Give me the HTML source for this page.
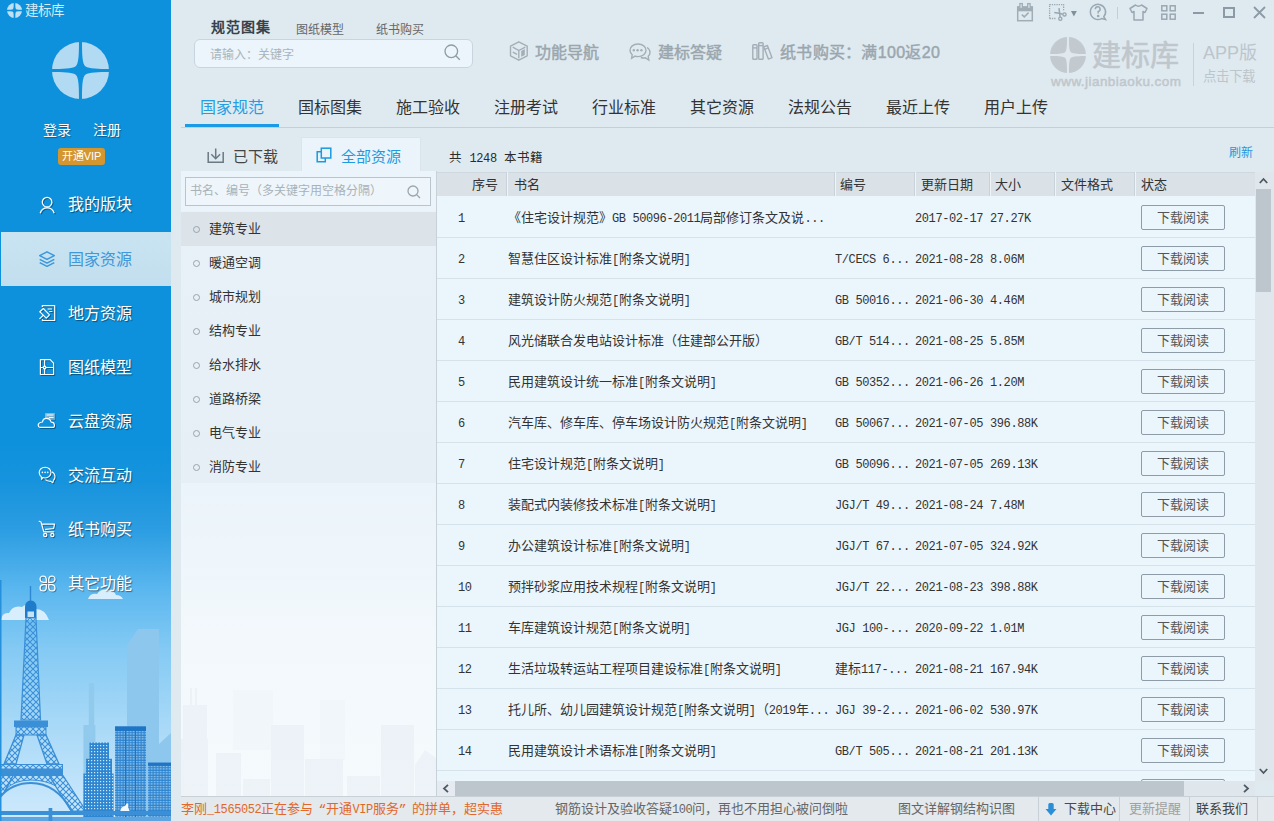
<!DOCTYPE html>
<html lang="zh-CN">
<head>
<meta charset="utf-8">
<style>
*{margin:0;padding:0;box-sizing:border-box}
html,body{width:1274px;height:821px;overflow:hidden}
body{position:relative;background:#dfeaf0;font-family:"Liberation Sans",sans-serif;color:#333}
.a{position:absolute;white-space:nowrap}
svg{position:absolute;overflow:visible}
/* sidebar */
#sb{left:0;top:0;width:171px;height:821px;overflow:hidden;
background:linear-gradient(#0d91dc 0px,#0d91dc 440px,#1693dd 480px,#2c9de2 530px,#5bb7ef 590px,#84caf4 650px,#a6d8f7 720px,#c6e6fb 800px,#cfeafc 821px)}
.mi{left:68px;font-size:16px;line-height:16px;color:#fff;text-shadow:1px 1px 1px rgba(0,0,0,.45)}
.mic{left:38px;width:18px;height:18px}
/* top */
.tb{font-size:16px;line-height:16px;color:#9aa6ae;-webkit-text-stroke:0.45px #9aa6ae}
.nav{top:100px;font-size:16px;line-height:16px;color:#333}
/* list */
.li{left:209px;font-size:13px;line-height:13px;color:#333}
.bul{left:193px;width:7px;height:7px;border:1.5px solid #98a3ab;border-radius:50%}
/* table */
.th{top:178px;font-size:13px;line-height:13px;color:#333}
.sep{top:172px;width:2px;height:24px;border-left:1px solid #c9d2d9;border-right:1px solid #f0f4f7}
.row{left:437px;width:818px;height:41px;border-bottom:1px solid #d6e2ea}
.c{font-family:"Liberation Mono",monospace;font-size:13px;line-height:14px;color:#333;top:15px}
.m{font-size:12px;letter-spacing:-0.4px}
.btn{left:704px;top:8px;width:84px;height:25px;border:1px solid #8e9ca8;border-radius:2px;font-size:13px;line-height:23px;text-align:center;color:#555}
.st{top:803px;font-size:13px;line-height:14px}
</style>
</head>
<body>

<!-- SIDEBAR -->
<div id="sb" class="a">
  <!-- small logo -->
  <svg style="left:7px;top:3px" width="15" height="15" viewBox="0 0 56 56">
    <circle cx="28" cy="28" r="28" fill="#bfe0f5"/>
    <path d="M25 0 H31 C31 10 31 21 34 23 C37 25 46 25 56 25 V31 C46 31 37 31 34 33 C31 35 31 46 31 56 H25 C25 46 25 35 22 33 C19 31 10 31 0 31 V25 C10 25 19 25 22 23 C25 21 25 10 25 0Z" fill="#0d91dc"/>
  </svg>
  <div class="a" style="left:25px;top:4px;font-size:13.5px;line-height:14px;color:#d4ebf8">建标库</div>
  <!-- avatar -->
  <svg style="left:52px;top:42px" width="57" height="57" viewBox="0 0 56 56">
    <circle cx="28" cy="28" r="28" fill="#b2daf2"/>
    <path d="M26.5 0 H29.5 C29.5 10 29.5 22 33 24 C36 26 46 26.5 56 26.5 V29.5 C46 29.5 36 30 33 32 C29.5 34 29.5 46 29.5 56 H26.5 C26.5 46 26.5 34 23 32 C20 30 10 29.5 0 29.5 V26.5 C10 26.5 20 26 23 24 C26.5 22 26.5 10 26.5 0Z" fill="#0d91dc"/>
  </svg>
  <div class="a" style="left:43px;top:123px;font-size:14px;line-height:15px;color:#fff;text-shadow:1px 1px 1px rgba(0,0,0,.35)">登录</div>
  <div class="a" style="left:93px;top:123px;font-size:14px;line-height:15px;color:#fff;text-shadow:1px 1px 1px rgba(0,0,0,.35)">注册</div>
  <div class="a" style="left:58px;top:148px;width:47px;height:17px;background:#d4962f;border-radius:3px;color:#fff;font-size:11px;line-height:17px;text-align:center">开通VIP</div>


  <!-- illustration -->
  <svg style="left:0;top:580px" width="171" height="241" viewBox="0 580 171 241">
    <defs>
      <pattern id="lat" width="6" height="6" patternUnits="userSpaceOnUse">
        <path d="M0 0 L6 6 M6 0 L0 6" stroke="#3b8fd7" stroke-width="1.1"/>
      </pattern>
      <pattern id="win" width="3" height="3" patternUnits="userSpaceOnUse">
        <rect width="3" height="3" fill="#2e86d1"/><rect x="1" y="1" width="1.2" height="1.2" fill="#cfe8fa"/>
      </pattern>
      <pattern id="win2" width="3" height="2.5" patternUnits="userSpaceOnUse">
        <rect width="3" height="2.5" fill="#2b82cf"/><rect x="0.6" y="1" width="2" height="1" fill="#a9d3f3"/>
      </pattern>
    </defs>
    <!-- background light buildings -->
    <path d="M127 645 L138 629 L159 629 L159 744 L171 733 L171 821 L127 821Z" fill="#8ec7ee"/>
    <rect x="88.8" y="683" width="5.4" height="50" fill="#92caee"/>
    <rect x="83.4" y="725" width="12" height="96" fill="#92caee"/>
    <!-- clouds -->
    <path d="M1 620 Q2 612 9 613 Q13 605 22 607 Q26 603 33 607 L36 609 Q45 609 49 620Z" fill="#d8eefc"/>
    <path d="M88 599 Q90 593 97 594 Q101 588 108 590 Q114 590 116 595 Q121 595 123 599Z" fill="#d8eefc"/>
    <!-- tower top -->
    <line x1="30.5" y1="586" x2="30.5" y2="602" stroke="#2f86d2" stroke-width="1.4"/>
    <path d="M25 618 V607 Q25 601 30.7 600.5 Q36.5 601 36.5 607 V618Z" fill="#1f7cca"/>
    <rect x="27.5" y="611.5" width="6.5" height="5.5" fill="#c6e2f6"/>
    <!-- upper lattice -->
    <path d="M26 618 L36 618 L40.5 720 L21 720Z" fill="url(#lat)" stroke="#3b8fd7" stroke-width="1.2"/>
    <!-- platform 1 -->
    <rect x="14" y="720.5" width="34" height="6.5" fill="#3b8fd7"/>
    <rect x="16" y="727" width="30" height="8" fill="url(#lat)" stroke="#3b8fd7" stroke-width="1"/>
    <!-- mid legs -->
    <path d="M16 735 L24 735 L16 764 L4 764Z" fill="url(#lat)" stroke="#3b8fd7" stroke-width="1.3"/>
    <path d="M37 735 L46 735 L59 764 L47 764Z" fill="url(#lat)" stroke="#3b8fd7" stroke-width="1.3"/>
    <!-- platform 2 -->
    <rect x="0.5" y="764.5" width="62" height="4.5" fill="url(#lat)" stroke="#3b8fd7" stroke-width="1"/>
    <rect x="0" y="769" width="63" height="6.5" fill="#3b8fd7"/>
    <!-- lower legs + arch -->
    <path d="M0 775.5 L13 775.5 L6 790 L0 797Z" fill="url(#lat)" stroke="#3b8fd7" stroke-width="1.2"/>
    <path d="M49 775.5 L63 775.5 L86 811 L71 811Z" fill="url(#lat)" stroke="#3b8fd7" stroke-width="1.2"/>
    <path d="M13 775.5 L49 775.5 L56 786 Q45 780 31 780 Q14 780 5 790Z" fill="url(#lat)" stroke="#3b8fd7" stroke-width="1"/>
    <path d="M0 797 Q12 783 31 783 Q56 783 72 811" fill="none" stroke="#3b8fd7" stroke-width="2"/>
    <!-- buildings -->
    <path d="M89.4 742.5 H109 V758.7 H112 V773.5 H113.6 V821 H83.4 V773.5 H86 V758.7 H89.4Z" fill="url(#win)"/>
    <rect x="115" y="726.4" width="31" height="95" fill="url(#win2)"/>
    <rect x="115" y="726.4" width="31" height="4.5" fill="#1f74c4"/>
    <rect x="125" y="731" width="1" height="90" fill="#1f74c4"/><rect x="135" y="731" width="1" height="90" fill="#1f74c4"/>
    <rect x="148" y="762.7" width="23" height="59" fill="url(#win2)"/>
    <rect x="148" y="762.7" width="23" height="3" fill="#1f74c4"/>
    <!-- cyclist -->
    <path d="M120 812 Q121 806 125 806 L127 803 Q129 804 128 807 L130 812Z" fill="#f2f9fe"/>
    <!-- ground rail -->
    <rect x="0" y="811" width="171" height="4" fill="#3b8fd7"/>
    <rect x="0" y="817" width="171" height="4" fill="#5ba6e2"/>
    <rect x="48.6" y="808" width="3.7" height="13" fill="#3b8fd7"/>
    <rect x="0" y="580" width="1.5" height="241" fill="#2590dc"/>
  </svg>

  <!-- active bg -->
  <div class="a" style="left:1px;top:232px;width:170px;height:54px;background:linear-gradient(#c9e3f1,#c2dfef)"></div>


  <!-- menu icons -->
  <svg style="left:39px;top:196px;filter:drop-shadow(1px 1px 0.6px rgba(0,0,0,.35))" width="16" height="18" viewBox="0 0 16 18" fill="none" stroke="#fff" stroke-width="1.3">
    <circle cx="8.1" cy="6.2" r="4.8"/><path d="M1.2 17.2 A7.3 7.3 0 0 1 15.2 17.2"/>
  </svg>
  <svg style="left:39px;top:251px" width="16" height="16" viewBox="0 0 16 16" fill="none" stroke="#3a97da" stroke-width="1.5" stroke-linejoin="round">
    <path d="M8 0.8 L15.3 4.6 L8 8.4 L0.7 4.6Z"/><path d="M0.7 8.3 L8 12.1 L15.3 8.3"/><path d="M0.7 11.6 L8 15.3 L15.3 11.6"/>
  </svg>
  <svg style="left:36px;top:302px;filter:drop-shadow(1px 1px 0.6px rgba(0,0,0,.35))" width="22" height="22" viewBox="0 0 22 22" fill="none" stroke="#fff" stroke-width="1.2" stroke-linejoin="round">
    <path d="M6.3 5 V3.6 H18.7 V18.5 H6.4 V17.2"/><path d="M11.6 7 H16 M13.3 9.5 H16.3"/>
    <path d="M3.8 9.7 L7.4 6.5 L13.5 12.9 L10.3 16.1Z"/><path d="M7.1 13.3 L3.5 16.9"/>
  </svg>
  <svg style="left:36px;top:356px;filter:drop-shadow(1px 1px 0.6px rgba(0,0,0,.35))" width="22" height="22" viewBox="0 0 22 22" fill="none" stroke="#fff" stroke-width="1.2" stroke-linejoin="round">
    <path d="M4.4 3.6 H14.2 L17.6 7.2 V18.5 H4.4Z"/><path d="M8.6 3.6 V18.5 M4.4 11.5 H17.6"/><circle cx="8.6" cy="11.5" r="1.3" fill="#0d91dc"/>
  </svg>
  <svg style="left:35px;top:409px;filter:drop-shadow(1px 1px 0.6px rgba(0,0,0,.35))" width="24" height="24" viewBox="0 0 24 24" fill="none" stroke="#fff" stroke-width="1.2" stroke-linejoin="round">
    <rect x="10.1" y="4.1" width="9.8" height="6.7" fill="rgba(255,255,255,.45)" stroke="none"/><path d="M11.5 6 H18.5 M14 8.5 H18.5" stroke="#fff" stroke-width="1"/>
    <path d="M5 18.4 H17.8 Q19.6 18.4 19.4 16 Q19.2 13.2 16.2 13.2 Q15.2 9.4 11.3 9.4 Q8 9.4 7.5 13 Q3.2 13.5 3.2 16.2 Q3.4 18.4 5 18.4Z" fill="#0d91dc"/>
  </svg>
  <svg style="left:36px;top:463px;filter:drop-shadow(1px 1px 0.6px rgba(0,0,0,.35))" width="22" height="22" viewBox="0 0 22 22" fill="none" stroke="#fff" stroke-width="1.1" stroke-linejoin="round">
    <path d="M15.8 8.8 Q19 10.5 19 13.6 Q19 15.6 17.6 17 L16.8 19.7 L14.4 18.1 Q11.8 18.6 9.4 16.6"/>
    <path d="M9.1 4.2 C12.4 4.2 15 6.6 15 9.6 C15 12.6 12.4 15 9.1 15 C8.2 15 7.4 14.9 6.7 14.6 L5.6 16.4 L5.3 13.8 C4 12.8 3.2 11.3 3.2 9.6 C3.2 6.6 5.8 4.2 9.1 4.2Z" fill="#0d91dc"/>
    <circle cx="6.4" cy="9.4" r=".8" fill="#fff" stroke="none"/><circle cx="9.1" cy="9.4" r=".8" fill="#fff" stroke="none"/><circle cx="11.7" cy="9.4" r=".8" fill="#fff" stroke="none"/>
  </svg>
  <svg style="left:36px;top:517px;filter:drop-shadow(1px 1px 0.6px rgba(0,0,0,.35))" width="22" height="22" viewBox="0 0 22 22" fill="none" stroke="#fff" stroke-width="1.2" stroke-linejoin="round" stroke-linecap="round">
    <path d="M3.2 4.3 L5 5 L7.8 14.8 H17.7 M6.3 7.2 H18.5 L17.6 11.5 L9.6 12.4"/>
    <circle cx="9.2" cy="18" r="1.6"/><circle cx="16.3" cy="18" r="1.6"/>
  </svg>
  <svg style="left:39px;top:575px;filter:drop-shadow(1px 1px 0.6px rgba(0,0,0,.3))" width="17" height="17" viewBox="0 0 17 17" fill="none" stroke="#fff" stroke-width="1.2">
    <path d="M1 4 A3 3 0 0 1 4 1 A3.5 3.5 0 0 1 7.3 4.3 V7.3 H4.3 A3.5 3.5 0 0 1 1 4Z"/>
    <path d="M16 4 A3 3 0 0 0 13 1 A3.5 3.5 0 0 0 9.7 4.3 V7.3 H12.7 A3.5 3.5 0 0 0 16 4Z"/>
    <path d="M1 13 A3 3 0 0 0 4 16 A3.5 3.5 0 0 0 7.3 12.7 V9.7 H4.3 A3.5 3.5 0 0 0 1 13Z"/>
    <path d="M16 13 A3 3 0 0 1 13 16 A3.5 3.5 0 0 1 9.7 12.7 V9.7 H12.7 A3.5 3.5 0 0 1 16 13Z"/>
  </svg>

  <!-- menu -->
  <div class="a mi" style="top:197px">我的版块</div>
  <div class="a mi" style="top:252px;color:#3f98da;text-shadow:none">国家资源</div>
  <div class="a mi" style="top:306px">地方资源</div>
  <div class="a mi" style="top:360px">图纸模型</div>
  <div class="a mi" style="top:414px">云盘资源</div>
  <div class="a mi" style="top:468px">交流互动</div>
  <div class="a mi" style="top:522px">纸书购买</div>
  <div class="a mi" style="top:576px">其它功能</div>
</div>

<!-- TOP AREA -->
<div class="a" style="left:211px;top:20px;font-size:14px;line-height:15px;letter-spacing:1px;font-weight:bold;color:#37424b">规范图集</div>
<div class="a" style="left:296px;top:23px;font-size:12px;line-height:14px;color:#666">图纸模型</div>
<div class="a" style="left:376px;top:23px;font-size:12px;line-height:14px;color:#666">纸书购买</div>

<div class="a" style="left:194px;top:39px;width:279px;height:29px;border:1px solid #c8d5de;border-radius:6px;background:#ebf5fb"></div>
<div class="a" style="left:210px;top:48px;font-size:12px;line-height:14px;color:#a9b4bb">请输入：关键字</div>


<!-- toolbar -->
<svg style="left:510px;top:41px" width="19" height="20" viewBox="0 0 19 20" fill="none" stroke="#a3aeb6" stroke-width="1.4" stroke-linejoin="round" stroke-linecap="round">
  <path d="M8.8 0.8 L17.2 5.2 V14.8 L8.8 19.2 L0.5 14.8 V5.2Z"/><path d="M3.2 6.3 L8.8 9.5 L14.8 6.3 M8.8 9.5 V16.7 M3.3 11.3 L6.6 13.2"/>
  <path d="M11.2 9.9 L14.8 8 V14 L11.2 15.8Z" fill="#a3aeb6" stroke="none"/>
</svg>
<div class="a tb" style="left:535px;top:45px">功能导航</div>
<svg style="left:629px;top:43px" width="22" height="18" viewBox="0 0 22 18" fill="none" stroke="#a3aeb6" stroke-width="1.4">
  <path d="M9 1 C13.8 1 17 3.8 17 7.3 C17 10.8 13.8 13.6 9 13.6 C7.9 13.6 6.9 13.4 6 13.1 L2.6 15.3 L3.2 11.7 C1.8 10.6 1 9 1 7.3 C1 3.8 4.2 1 9 1Z"/>
  <path d="M18 4.5 C20 5.7 21 7.4 21 9.4 C21 11 20.3 12.3 19.2 13.3 L19.8 17 L16.4 14.8 C15 15.1 13.3 15 11.8 14.5"/>
  <circle cx="4.8" cy="7.2" r="1.2" fill="#a3aeb6" stroke="none"/><circle cx="8.6" cy="7.2" r="1.2" fill="#a3aeb6" stroke="none"/><circle cx="12.4" cy="7.2" r="1.2" fill="#a3aeb6" stroke="none"/>
</svg>
<div class="a tb" style="left:658px;top:45px">建标答疑</div>
<svg style="left:751px;top:42px" width="22" height="18" viewBox="0 0 22 18" fill="none" stroke="#a3aeb6" stroke-width="1.4" stroke-linejoin="round">
  <rect x="1.8" y="2.8" width="4.2" height="14.4" rx="0.8"/><path d="M1.8 5.9 H6"/>
  <rect x="7.7" y="0.7" width="4.4" height="16.5" rx="0.8"/><path d="M7.7 3.6 H12.1"/>
  <path d="M12.8 4.9 L16.4 3.5 L21 15.7 L17.4 17.1Z"/><path d="M13.7 7.3 L17.2 5.9"/>
</svg>
<div class="a tb" style="left:780px;top:45px;letter-spacing:0.3px">纸书购买：满100返20</div>

<!-- right logo -->
<svg style="left:1050px;top:37px" width="36" height="36" viewBox="0 0 56 56">
  <circle cx="28" cy="28" r="28" fill="#c2cad0"/>
  <path d="M26.5 0 H29.5 C29.5 10 29.5 22 33 24 C36 26 46 26.5 56 26.5 V29.5 C46 29.5 36 30 33 32 C29.5 34 29.5 46 29.5 56 H26.5 C26.5 46 26.5 34 23 32 C20 30 10 29.5 0 29.5 V26.5 C10 26.5 20 26 23 24 C26.5 22 26.5 10 26.5 0Z" fill="#e1e9ef"/>
</svg>
<div class="a" style="left:1092px;top:40px;font-size:29px;line-height:32px;color:#bfc7cd;-webkit-text-stroke:0.6px #bfc7cd">建标库</div>
<div class="a" style="left:1051px;top:74px;font-size:13.5px;line-height:16px;color:#bfc7cd;-webkit-text-stroke:0.5px #bfc7cd;letter-spacing:0.45px">www.jianbiaoku.com</div>
<div class="a" style="left:1193px;top:43px;width:1px;height:43px;background:#cad2d8"></div>
<div class="a" style="left:1203px;top:42px;font-size:18px;line-height:22px;color:#bcc5cc">APP版</div>
<div class="a" style="left:1203px;top:69px;font-size:13.5px;line-height:16px;color:#bcc5cc">点击下载</div>

<!-- window controls -->
<svg style="left:1016px;top:2px" width="18" height="20" viewBox="0 0 18 20" fill="none" stroke="#a0adb5" stroke-width="1.5">
  <rect x="1.7" y="5" width="14.6" height="13.7"/><rect x="1" y="4.5" width="16" height="4.8" fill="#a0adb5" stroke="none"/>
  <rect x="3.9" y="1.6" width="2.4" height="5" fill="#e1e9ef" stroke-width="1.3"/><rect x="11.7" y="1.6" width="2.4" height="5" fill="#e1e9ef" stroke-width="1.3"/>
  <path d="M5.8 12.6 L8.3 14.9 L12.6 10.6"/>
</svg>
<svg style="left:1048px;top:3px" width="30" height="19" viewBox="0 0 30 19" fill="none" stroke="#98a6af" stroke-width="1.3">
  <path d="M1.6 15.5 V1.6 H15.6 V7.5" stroke-dasharray="1.3 1"/><path d="M1.6 15.5 H8" stroke-dasharray="1.3 1"/>
  <path d="M11 5.2 Q11.6 10.5 12.1 14" stroke-width="1.5"/><circle cx="12.3" cy="15.7" r="1.6"/>
  <path d="M6.3 9.6 Q11.5 10.4 14.7 11.2" stroke-width="1.5"/><circle cx="16.5" cy="11.4" r="1.6"/>
  <path d="M23 8 H28.8 L25.9 13.5Z" fill="#7f9099" stroke="none"/>
</svg>
<svg style="left:1089px;top:3px" width="18" height="18" viewBox="0 0 18 18" fill="none" stroke="#9aa8b2" stroke-width="1.5">
  <path d="M16.5 16.5 L14.8 13.8 A7.6 7.6 0 1 0 12.6 15.6Z"/>
  <path d="M6.3 6.3 A2.4 2.4 0 1 1 9.2 8.6 V10.5"/><circle cx="9.2" cy="13" r=".6" fill="#9aa8b2"/>
</svg>
<div class="a" style="left:1117px;top:7px;width:1px;height:12px;background:#c5ced5"></div>
<svg style="left:1129px;top:4px" width="19" height="17" viewBox="0 0 19 17" fill="none" stroke="#9aa8b2" stroke-width="1.5" stroke-linejoin="round">
  <path d="M6.5 1 Q9.5 3.5 12.5 1 L18 4.5 L16 8.5 L14 7.5 V16 H5 V7.5 L3 8.5 L1 4.5Z"/>
</svg>
<svg style="left:1161px;top:5px" width="15" height="15" viewBox="0 0 15 15" fill="none" stroke="#9aa8b2" stroke-width="1.5">
  <rect x="0.8" y="0.8" width="5" height="5"/><rect x="9.2" y="0.8" width="5" height="5"/><rect x="0.8" y="9.2" width="5" height="5"/><rect x="9.2" y="9.2" width="5" height="5"/>
</svg>
<div class="a" style="left:1193px;top:12px;width:11px;height:2px;background:#8b9aa5"></div>
<div class="a" style="left:1223px;top:7px;width:12px;height:11px;border:2px solid #8b9aa5"></div>
<svg style="left:1253px;top:6px" width="13" height="13" viewBox="0 0 13 13" stroke="#8b9aa5" stroke-width="1.8">
  <path d="M1 1 L12 12 M12 1 L1 12"/>
</svg>

<!-- search icon top -->
<svg style="left:444px;top:44px" width="17" height="17" viewBox="0 0 17 17" fill="none" stroke="#8f9ca6" stroke-width="1.3">
  <circle cx="7.3" cy="7.3" r="6.3"/><path d="M11.8 11.8 L15.8 15.8"/>
</svg>

<!-- nav tabs -->
<div class="a nav" style="left:200px;color:#259de3">国家规范</div>
<div class="a nav" style="left:298px">国标图集</div>
<div class="a nav" style="left:396px">施工验收</div>
<div class="a nav" style="left:494px">注册考试</div>
<div class="a nav" style="left:592px">行业标准</div>
<div class="a nav" style="left:690px">其它资源</div>
<div class="a nav" style="left:788px">法规公告</div>
<div class="a nav" style="left:886px">最近上传</div>
<div class="a nav" style="left:984px">用户上传</div>
<div class="a" style="left:181px;top:127px;width:1093px;height:1px;background:#c6cfd6"></div>
<div class="a" style="left:185px;top:124px;width:94px;height:3px;background:#1b9be6"></div>

<!-- LEFT PANEL -->
<div class="a" style="left:301px;top:137px;width:120px;height:35px;background:#eaf4fa;border:1px solid #d9e4eb;border-bottom:none"></div>
<div class="a" style="left:233px;top:149px;font-size:15px;line-height:16px;color:#444">已下载</div>
<div class="a" style="left:341px;top:149px;font-size:15px;line-height:16px;color:#1f9ae0">全部资源</div>
<div class="a" style="left:181px;top:171px;width:255px;height:312px;background:linear-gradient(#eaf4fa 0px,#eaf4fa 40px,#e8f1f7 41px,#e6eff5 312px)"></div>
<div class="a" style="left:181px;top:483px;width:255px;height:313px;background:linear-gradient(#ebf4fa,#f2f8fc 150px,#f5fafd 313px)"></div>

<svg style="left:181px;top:680px" width="255" height="116" viewBox="181 680 255 116" opacity="0.4">
  <g fill="#e2eaf0">
    <rect x="190" y="688" width="2" height="17"/><rect x="195" y="688" width="2" height="17"/>
    <rect x="183" y="705" width="24" height="91"/><rect x="181" y="739" width="27" height="57"/>
    <rect x="216" y="753" width="25" height="43"/>
    <rect x="243" y="779" width="27" height="17"/>
    <rect x="271" y="725" width="33" height="71"/>
    <rect x="305" y="759" width="38" height="37"/>
    <rect x="347" y="776" width="33" height="20"/>
    <rect x="381" y="725" width="33" height="71"/>
    <path d="M415 796 V765 L425 750 L436 758 V796Z"/>
    <rect x="233" y="690" width="40" height="60" opacity=".45"/><rect x="320" y="700" width="25" height="60" opacity=".45"/>
  </g>
</svg>

<div class="a" style="left:185px;top:177px;width:246px;height:29px;border:1px solid #b9c5cd;background:#eef6fb"></div>
<div class="a" style="left:190px;top:184px;font-size:12px;line-height:14px;color:#a8b2b9">书名、编号（多关键字用空格分隔）</div>
<div class="a" style="left:181px;top:212px;width:255px;height:34px;background:#dce4ea"></div>

<div class="a bul" style="top:226px"></div><div class="a li" style="top:222px">建筑专业</div>
<div class="a bul" style="top:260px"></div><div class="a li" style="top:256px">暖通空调</div>
<div class="a bul" style="top:294px"></div><div class="a li" style="top:290px">城市规划</div>
<div class="a bul" style="top:328px"></div><div class="a li" style="top:324px">结构专业</div>
<div class="a bul" style="top:362px"></div><div class="a li" style="top:358px">给水排水</div>
<div class="a bul" style="top:396px"></div><div class="a li" style="top:392px">道路桥梁</div>
<div class="a bul" style="top:430px"></div><div class="a li" style="top:426px">电气专业</div>
<div class="a bul" style="top:464px"></div><div class="a li" style="top:460px">消防专业</div>

<svg style="left:207px;top:148px" width="18" height="16" viewBox="0 0 18 16" fill="none" stroke="#6c7982" stroke-width="1.5">
  <path d="M1.2 4 V14.3 H16.2 V4"/><path d="M8.7 0.5 V10.5 M4.3 6.3 L8.7 10.7 L13.1 6.3"/>
</svg>
<svg style="left:316px;top:147px" width="16" height="16" viewBox="0 0 16 16" fill="none" stroke="#1a9ae0" stroke-width="1.5">
  <path d="M5.3 4.8 H1.2 V14.8 H9.3 V11"/><rect x="5.3" y="1.2" width="9.5" height="9.8"/>
</svg>
<svg style="left:407px;top:185px" width="14" height="14" viewBox="0 0 14 14" fill="none" stroke="#9aa6ae" stroke-width="1.3">
  <circle cx="6" cy="6" r="5"/><path d="M9.6 9.6 L13 13"/>
</svg>

<!-- RIGHT -->
<div class="a" style="left:437px;top:172px;width:818px;height:609px;background:#ebf6fc"></div>
<div class="a" style="left:436px;top:171px;width:1px;height:625px;background:#c8d1d8"></div>


<!-- TABLE HEADER -->
<div class="a" style="left:437px;top:172px;width:818px;height:24px;background:#dae2e8;border-top:1px solid #cfd8df"></div>
<div class="a sep" style="left:506px"></div>
<div class="a sep" style="left:834px"></div>
<div class="a sep" style="left:914px"></div>
<div class="a sep" style="left:989px"></div>
<div class="a sep" style="left:1054px"></div>
<div class="a sep" style="left:1134px"></div>
<div class="a th" style="left:472px">序号</div>
<div class="a th" style="left:514px">书名</div>
<div class="a th" style="left:840px">编号</div>
<div class="a th" style="left:921px">更新日期</div>
<div class="a th" style="left:995px">大小</div>
<div class="a th" style="left:1061px">文件格式</div>
<div class="a th" style="left:1141px">状态</div>
<div class="a" style="left:449px;top:152px;font-family:'Liberation Mono',monospace;font-size:12.5px;line-height:14px;color:#2b2b2b">共 <span class="m">1248</span> 本书籍</div>
<div class="a" style="left:1229px;top:146px;font-size:12px;line-height:14px;color:#1f96dc">刷新</div>
<!-- ROWS -->
<div class="a row" style="top:197px"><div class="a c" style="left:21px"><span class="m">1</span></div><div class="a c" style="left:71px">《住宅设计规范》<span class="m">GB&#160;50096-2011</span>局部修订条文及说<span class="m">...</span></div><div class="a c" style="left:398px"></div><div class="a c" style="left:478px"><span class="m">2017-02-17</span></div><div class="a c" style="left:553px"><span class="m">27.27K</span></div><div class="a btn">下载阅读</div></div>
<div class="a row" style="top:238px"><div class="a c" style="left:21px"><span class="m">2</span></div><div class="a c" style="left:71px">智慧住区设计标准<span class="m">[</span>附条文说明<span class="m">]</span></div><div class="a c" style="left:398px"><span class="m">T/CECS&#160;6...</span></div><div class="a c" style="left:478px"><span class="m">2021-08-28</span></div><div class="a c" style="left:553px"><span class="m">8.06M</span></div><div class="a btn">下载阅读</div></div>
<div class="a row" style="top:279px"><div class="a c" style="left:21px"><span class="m">3</span></div><div class="a c" style="left:71px">建筑设计防火规范<span class="m">[</span>附条文说明<span class="m">]</span></div><div class="a c" style="left:398px"><span class="m">GB&#160;50016...</span></div><div class="a c" style="left:478px"><span class="m">2021-06-30</span></div><div class="a c" style="left:553px"><span class="m">4.46M</span></div><div class="a btn">下载阅读</div></div>
<div class="a row" style="top:320px"><div class="a c" style="left:21px"><span class="m">4</span></div><div class="a c" style="left:71px">风光储联合发电站设计标准（住建部公开版）</div><div class="a c" style="left:398px"><span class="m">GB/T&#160;514...</span></div><div class="a c" style="left:478px"><span class="m">2021-08-25</span></div><div class="a c" style="left:553px"><span class="m">5.85M</span></div><div class="a btn">下载阅读</div></div>
<div class="a row" style="top:361px"><div class="a c" style="left:21px"><span class="m">5</span></div><div class="a c" style="left:71px">民用建筑设计统一标准<span class="m">[</span>附条文说明<span class="m">]</span></div><div class="a c" style="left:398px"><span class="m">GB&#160;50352...</span></div><div class="a c" style="left:478px"><span class="m">2021-06-26</span></div><div class="a c" style="left:553px"><span class="m">1.20M</span></div><div class="a btn">下载阅读</div></div>
<div class="a row" style="top:402px"><div class="a c" style="left:21px"><span class="m">6</span></div><div class="a c" style="left:71px">汽车库、修车库、停车场设计防火规范<span class="m">[</span>附条文说明<span class="m">]</span></div><div class="a c" style="left:398px"><span class="m">GB&#160;50067...</span></div><div class="a c" style="left:478px"><span class="m">2021-07-05</span></div><div class="a c" style="left:553px"><span class="m">396.88K</span></div><div class="a btn">下载阅读</div></div>
<div class="a row" style="top:443px"><div class="a c" style="left:21px"><span class="m">7</span></div><div class="a c" style="left:71px">住宅设计规范<span class="m">[</span>附条文说明<span class="m">]</span></div><div class="a c" style="left:398px"><span class="m">GB&#160;50096...</span></div><div class="a c" style="left:478px"><span class="m">2021-07-05</span></div><div class="a c" style="left:553px"><span class="m">269.13K</span></div><div class="a btn">下载阅读</div></div>
<div class="a row" style="top:484px"><div class="a c" style="left:21px"><span class="m">8</span></div><div class="a c" style="left:71px">装配式内装修技术标准<span class="m">[</span>附条文说明<span class="m">]</span></div><div class="a c" style="left:398px"><span class="m">JGJ/T&#160;49...</span></div><div class="a c" style="left:478px"><span class="m">2021-08-24</span></div><div class="a c" style="left:553px"><span class="m">7.48M</span></div><div class="a btn">下载阅读</div></div>
<div class="a row" style="top:525px"><div class="a c" style="left:21px"><span class="m">9</span></div><div class="a c" style="left:71px">办公建筑设计标准<span class="m">[</span>附条文说明<span class="m">]</span></div><div class="a c" style="left:398px"><span class="m">JGJ/T&#160;67...</span></div><div class="a c" style="left:478px"><span class="m">2021-07-05</span></div><div class="a c" style="left:553px"><span class="m">324.92K</span></div><div class="a btn">下载阅读</div></div>
<div class="a row" style="top:566px"><div class="a c" style="left:21px"><span class="m">10</span></div><div class="a c" style="left:71px">预拌砂浆应用技术规程<span class="m">[</span>附条文说明<span class="m">]</span></div><div class="a c" style="left:398px"><span class="m">JGJ/T&#160;22...</span></div><div class="a c" style="left:478px"><span class="m">2021-08-23</span></div><div class="a c" style="left:553px"><span class="m">398.88K</span></div><div class="a btn">下载阅读</div></div>
<div class="a row" style="top:607px"><div class="a c" style="left:21px"><span class="m">11</span></div><div class="a c" style="left:71px">车库建筑设计规范<span class="m">[</span>附条文说明<span class="m">]</span></div><div class="a c" style="left:398px"><span class="m">JGJ&#160;100-...</span></div><div class="a c" style="left:478px"><span class="m">2020-09-22</span></div><div class="a c" style="left:553px"><span class="m">1.01M</span></div><div class="a btn">下载阅读</div></div>
<div class="a row" style="top:648px"><div class="a c" style="left:21px"><span class="m">12</span></div><div class="a c" style="left:71px">生活垃圾转运站工程项目建设标准<span class="m">[</span>附条文说明<span class="m">]</span></div><div class="a c" style="left:398px">建标<span class="m">117-...</span></div><div class="a c" style="left:478px"><span class="m">2021-08-21</span></div><div class="a c" style="left:553px"><span class="m">167.94K</span></div><div class="a btn">下载阅读</div></div>
<div class="a row" style="top:689px"><div class="a c" style="left:21px"><span class="m">13</span></div><div class="a c" style="left:71px">托儿所、幼儿园建筑设计规范<span class="m">[</span>附条文说明<span class="m">]</span>（<span class="m">2019</span>年<span class="m">...</span></div><div class="a c" style="left:398px"><span class="m">JGJ&#160;39-2...</span></div><div class="a c" style="left:478px"><span class="m">2021-06-02</span></div><div class="a c" style="left:553px"><span class="m">530.97K</span></div><div class="a btn">下载阅读</div></div>
<div class="a row" style="top:730px"><div class="a c" style="left:21px"><span class="m">14</span></div><div class="a c" style="left:71px">民用建筑设计术语标准<span class="m">[</span>附条文说明<span class="m">]</span></div><div class="a c" style="left:398px"><span class="m">GB/T&#160;505...</span></div><div class="a c" style="left:478px"><span class="m">2021-08-21</span></div><div class="a c" style="left:553px"><span class="m">201.13K</span></div><div class="a btn">下载阅读</div></div>
<div class="a" style="left:437px;top:771px;width:818px;height:10px;overflow:hidden"><div class="a" style="left:704px;top:8px;width:84px;height:25px;border:1px solid #8e9ca8;border-radius:2px"></div></div>
<!-- SCROLLBARS -->
<div class="a" style="left:1255px;top:172px;width:19px;height:609px;background:#dfe6ec"></div>
<div class="a" style="left:1256px;top:189px;width:15px;height:103px;background:#bdc6cd"></div>
<div class="a" style="left:437px;top:781px;width:818px;height:15px;background:#dfe6ec"></div>
<div class="a" style="left:455px;top:781px;width:729px;height:15px;background:#bdc6cd"></div>


<svg style="left:1259px;top:177px" width="9" height="7" viewBox="0 0 9 7" fill="none" stroke="#4d5a64" stroke-width="1.8"><path d="M0.8 6 L4.5 2 L8.2 6"/></svg>
<svg style="left:1259px;top:768px" width="9" height="7" viewBox="0 0 9 7" fill="none" stroke="#4d5a64" stroke-width="1.8"><path d="M0.8 1 L4.5 5 L8.2 1"/></svg>
<div class="a" style="left:437px;top:781px;width:18px;height:15px;background:#e5ebf0"></div>
<svg style="left:442px;top:784px" width="7" height="9" viewBox="0 0 7 9" fill="none" stroke="#4d5a64" stroke-width="1.8"><path d="M6 0.8 L2 4.5 L6 8.2"/></svg>
<svg style="left:1243px;top:784px" width="7" height="9" viewBox="0 0 7 9" fill="none" stroke="#4d5a64" stroke-width="1.8"><path d="M1 0.8 L5 4.5 L1 8.2"/></svg>

<!-- STATUS BAR -->
<div class="a" style="left:181px;top:796px;width:1093px;height:25px;background:#e3e9ed;border-top:1px solid #c9d1d8"></div>


<div class="a st" style="left:181px;color:#e2672a;font-family:'Liberation Mono',monospace">李刚<span class="m">_1565052</span>正在参与<span style="display:inline-block;width:13px;text-align:right">“</span>开通<span class="m">VIP</span>服务<span style="display:inline-block;width:13px;text-align:left">”</span>的拼单，超实惠</div>
<div class="a st" style="left:555px;color:#666;font-family:'Liberation Mono',monospace">钢筋设计及验收答疑<span class="m">100</span>问，再也不用担心被问倒啦</div>
<div class="a st" style="left:898px;top:802px;color:#666">图文详解钢结构识图</div>
<div class="a" style="left:1038px;top:797px;width:1px;height:24px;background:#c9d1d8"></div>
<div class="a st" style="left:1064px;top:802px;color:#4a4a4a">下载中心</div>
<div class="a" style="left:1119px;top:797px;width:1px;height:24px;background:#c9d1d8"></div>
<div class="a st" style="left:1129px;top:802px;color:#a0a0a0">更新提醒</div>
<div class="a" style="left:1189px;top:797px;width:1px;height:24px;background:#c9d1d8"></div>
<div class="a st" style="left:1196px;top:802px;color:#444">联系我们</div>
<div class="a" style="left:1257px;top:797px;width:1px;height:24px;background:#c9d1d8"></div>


<svg style="left:1045px;top:803px" width="12" height="13" viewBox="0 0 12 13"><path d="M3.3 1.5 Q3.3 0 4.8 0 H7.2 Q8.7 0 8.7 1.5 V6 H11.5 L6 12.5 L0.5 6 H3.3Z" fill="#2a8fd6"/></svg>

</body>
</html>
